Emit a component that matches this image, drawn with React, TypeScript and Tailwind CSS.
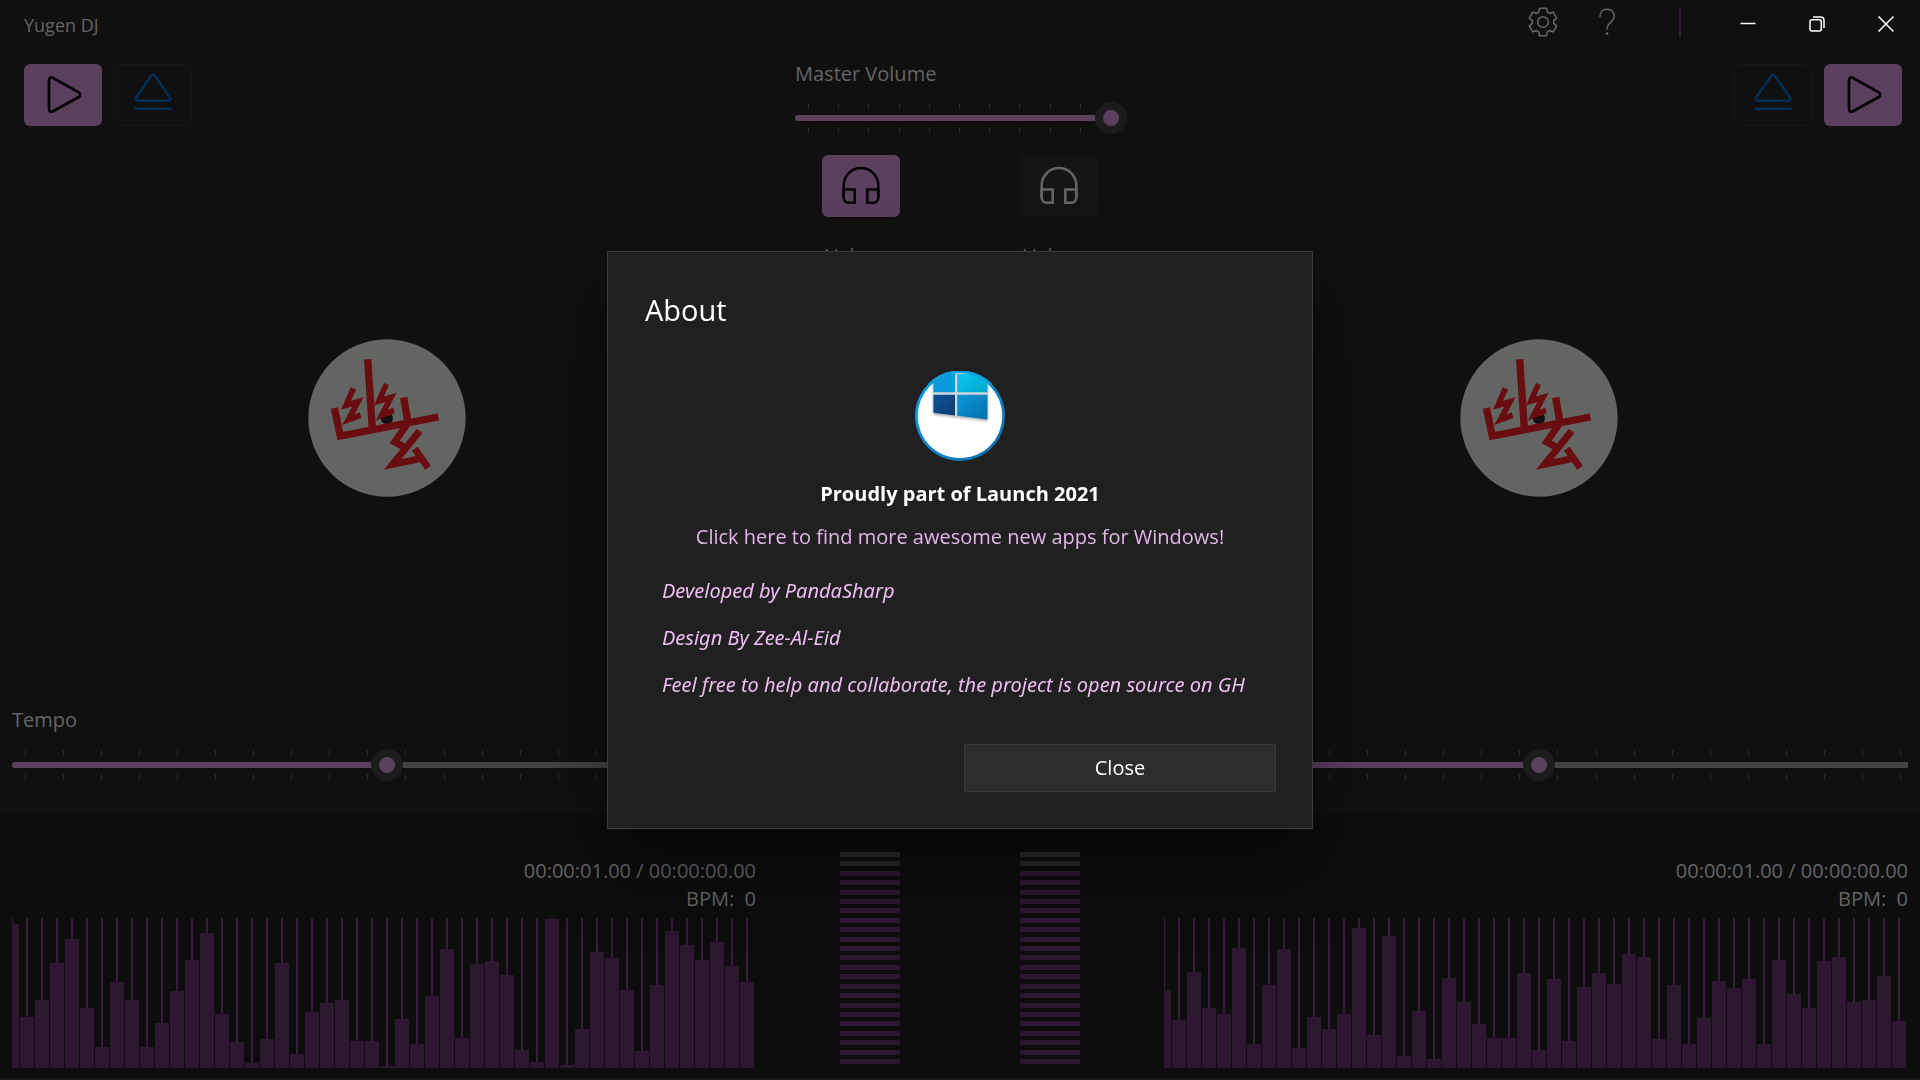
import type { CSSProperties, ReactNode } from "react";

const CHART_HEIGHT = 150;

const LEFT_LEVELS = [
  144, 51, 68, 105, 129, 60, 21, 86, 68, 21, 45, 77, 108, 135, 54, 26, 5, 29, 105, 14, 56, 65, 68, 27, 27, 2,
  49, 24, 72, 119, 30, 104, 107, 93, 18, 6, 149, 3, 39, 116, 110, 78, 17, 83, 137, 123, 108, 126, 102, 86,
];

const RIGHT_LEVELS = [
  78, 48, 96, 60, 54, 120, 24, 83, 119, 20, 51, 39, 54, 140, 33, 132, 12, 57, 9, 90, 66, 44, 30, 30, 95, 18,
  89, 27, 81, 95, 84, 114, 111, 29, 83, 24, 50, 87, 80, 89, 24, 108, 74, 60, 107, 111, 66, 68, 92, 47,
];

function PlayIcon() {
  return (
    <svg width="40" height="40" viewBox="0 0 40 40" fill="none" stroke="#000" strokeWidth="2.7" strokeLinejoin="round" aria-hidden="true">
      <path d="M6 5.2C6 2.8 8 1.8 10 3L35.8 17.4C37.6 18.5 37.6 20.9 35.8 22L10 36.3C8 37.4 6 36.4 6 34.2Z" />
    </svg>
  );
}

function EjectIcon() {
  return (
    <svg width="40" height="44" viewBox="0 0 40 44" fill="none" stroke="#02305a" strokeWidth="2.5" strokeLinecap="round" strokeLinejoin="round" aria-hidden="true">
      <path d="M18.2 2.8C19.1 1.5 20.9 1.5 21.8 2.8L36.8 24.4C38 26.1 37 27.8 35 27.8H5C3 27.8 2 26.1 3.2 24.4Z" />
      <path d="M2.5 35.7H37.5" />
    </svg>
  );
}

function HeadphonesIcon({ color }: { color: string }) {
  return (
    <svg width="40" height="40" viewBox="0 0 40 40" fill="none" stroke={color} strokeWidth="2.5" aria-hidden="true">
      <path d="M2.7 32V19.3C2.7 9.6 10.4 2 20 2s17.3 7.6 17.3 17.3V32" />
      <path d="M2.7 23.5H13.7V36.8H8A5.3 5.3 0 0 1 2.7 31.5Z" />
      <path d="M37.3 23.5H26.3V36.8H32A5.3 5.3 0 0 0 37.3 31.5Z" />
    </svg>
  );
}

function GearIcon() {
  const points: string[] = [];
  for (let tooth = 0; tooth < 6; tooth++) {
    for (const [radius, offset] of [[10.8, -23], [14.2, -14], [14.2, 14], [10.8, 23]]) {
      const angle = ((tooth * 60 - 90 + offset) * Math.PI) / 180;
      points.push(`${15 + radius * Math.cos(angle)},${15 + radius * Math.sin(angle)}`);
    }
  }
  return (
    <svg width="30" height="30" viewBox="0 0 30 30" fill="none" stroke="#656565" strokeWidth="1.6" strokeLinejoin="round" aria-hidden="true">
      <polygon points={points.join(" ")} />
      <circle cx="15" cy="15" r="5.3" />
    </svg>
  );
}

function QuestionIcon() {
  return (
    <svg width="20" height="30" viewBox="0 0 20 30" fill="none" stroke="#656565" strokeWidth="1.5" strokeLinecap="round" aria-hidden="true">
      <path d="M3 9.5C3 5 6 2.2 10 2.2s7.2 2.7 7.2 6.8c0 5.6-7.2 6.8-7.2 13" />
      <circle cx="10" cy="26.6" r="1.4" fill="#656565" stroke="none" />
    </svg>
  );
}

function Disc() {
  return (
    <svg width="158" height="158" viewBox="54 58 474 474" fill="none" stroke="#6a0d11" role="img" aria-label="Turntable">
      <circle cx="291" cy="295" r="236" fill="#636562" stroke="none" />
      <circle cx="291" cy="296" r="18" fill="#101010" stroke="none" />
      <path strokeWidth="22" d="M233 119L247 328M133 265L151 349L445 292M341 233L355 315" />
      <path strokeWidth="17" d="M190 206L168 257L204 246L175 300L212 286" />
      <path strokeWidth="17" d="M289 193L267 244L303 233L275 287L312 272" />
      <path strokeWidth="21" d="M352 312L314 367L346 384M389 334L308 434L394 416M374 387L414 444" />
    </svg>
  );
}

function LaunchLogo() {
  return (
    <svg width="90" height="90" viewBox="0 0 90 90" role="img" aria-label="Launch 2021">
      <defs>
        <linearGradient id="ring" x1="0" y1="0" x2="1" y2="1">
          <stop offset="0" stopColor="#0ea5e9" />
          <stop offset="1" stopColor="#0a6cab" />
        </linearGradient>
        <linearGradient id="cyan" x1="0" y1="0" x2="1" y2="1">
          <stop offset="0" stopColor="#06c8ee" />
          <stop offset="1" stopColor="#06a5cd" />
        </linearGradient>
        <linearGradient id="azure" x1="0" y1="0" x2="1" y2="1">
          <stop offset="0" stopColor="#0a96da" />
          <stop offset="1" stopColor="#0670aa" />
        </linearGradient>
        <linearGradient id="navy" x1="0" y1="0" x2="1" y2="1">
          <stop offset="0" stopColor="#0e529a" />
          <stop offset="1" stopColor="#0a3c72" />
        </linearGradient>
        <filter id="soft" x="-20%" y="-20%" width="140%" height="140%">
          <feGaussianBlur stdDeviation="1.5" />
        </filter>
        <clipPath id="disc">
          <circle cx="45" cy="45" r="45" />
        </clipPath>
      </defs>
      <circle cx="45" cy="45" r="45" fill="url(#ring)" />
      <circle cx="45" cy="45" r="42.3" fill="#fff" />
      <g clipPath="url(#disc)">
        <path d="M18.4 2H72.5V50L18.4 43.5Z" fill="#000" opacity=".35" filter="url(#soft)" />
        <path d="M18.4 0H72.5V48.7L18.4 42Z" fill="#cfd6da" />
        <path d="M18.4 0H40V21.3H18.4Z" fill="#0c98dc" />
        <path d="M42.2 3H72.5V21.3H42.2Z" fill="url(#cyan)" />
        <path d="M18.4 23.7H40V44.5L19.4 42Q18.4 41.8 18.4 40.8Z" fill="url(#navy)" />
        <path d="M42.2 23.7H72.5V47.7Q72.5 48.8 71.4 48.6L42.2 44.8Z" fill="url(#azure)" />
      </g>
      <path d="M14 13.5A44 44 0 0 1 76 13.5" fill="none" stroke="#0d9ee0" strokeWidth="2.5" />
    </svg>
  );
}

function Slider({ label, value, ticks, inset }: { label: string; value: number; ticks: number; inset: string }) {
  return (
    <div className="relative h-8">
      <div className={`absolute inset-0 flex flex-col justify-between py-px ${inset}`} aria-hidden="true">
        {[0, 1].map((row) => (
          <div key={row} className="flex justify-between">
            {Array.from({ length: ticks }, (_, i) => (
              <span key={i} className="h-1.5 w-px bg-[#2b2b2b]" />
            ))}
          </div>
        ))}
      </div>
      <input
        type="range"
        aria-label={label}
        defaultValue={value}
        style={{ "--fill": `${value}%` } as CSSProperties}
        className="relative block h-8 w-full appearance-none bg-transparent [&::-webkit-slider-runnable-track]:h-1.5 [&::-webkit-slider-runnable-track]:rounded-full [&::-webkit-slider-runnable-track]:bg-[linear-gradient(to_right,#5b405e_var(--fill),#434343_var(--fill))] [&::-webkit-slider-thumb]:-mt-[13px] [&::-webkit-slider-thumb]:size-8 [&::-webkit-slider-thumb]:appearance-none [&::-webkit-slider-thumb]:rounded-full [&::-webkit-slider-thumb]:border-8 [&::-webkit-slider-thumb]:border-solid [&::-webkit-slider-thumb]:border-[#1c1c1c] [&::-webkit-slider-thumb]:bg-[#5b405e]"
      />
    </div>
  );
}

function PlayButton() {
  return (
    <button type="button" aria-label="Play" className="flex h-[62px] w-[78px] items-center justify-center rounded-md bg-[#5b405e]">
      <PlayIcon />
    </button>
  );
}

function EjectButton() {
  return (
    <button type="button" aria-label="Load track" className="flex h-[62px] w-[78px] items-center justify-center rounded-md border border-[#171717]">
      <EjectIcon />
    </button>
  );
}

function Deck({ name, showLabel, children }: { name: string; showLabel: boolean; children: ReactNode }) {
  return (
    <section aria-label={name} className="flex flex-col pr-1.5 pb-8 pl-3">
      {children}
      <div className="flex flex-1 items-center justify-center pt-1">
        <Disc />
      </div>
      <div className="mb-[15px] h-7">{showLabel && "Tempo"}</div>
      <div className="mr-1.5 overflow-hidden">
        <div className="-mr-1.5">
          <Slider label={`${name} tempo`} value={50} ticks={20} inset="px-[13px]" />
        </div>
      </div>
    </section>
  );
}

function Waveform({ levels }: { levels: number[] }) {
  return (
    <svg className="mt-[5px] block h-[150px] w-full" viewBox="0 0 744 150" preserveAspectRatio="none" shapeRendering="crispEdges" aria-hidden="true">
      {levels.map((level, i) => (
        <g key={i}>
          <rect x={i * 15 - 1} y="0" width="2" height={CHART_HEIGHT - level} fill="#39193f" />
          <rect x={i * 15 - 7} y={CHART_HEIGHT - level} width="14" height={level} fill="#2e1831" />
        </g>
      ))}
    </svg>
  );
}

function TrackInfo({ levels }: { levels: number[] }) {
  return (
    <div className="px-3 pt-11 pb-[10px]">
      <p className="text-right">00:00:01.00 / 00:00:00.00</p>
      <p className="text-right whitespace-pre">BPM:  0</p>
      <Waveform levels={levels} />
    </div>
  );
}

function Meter() {
  return (
    <div className="flex h-[212px] w-[60px] flex-col justify-between" aria-hidden="true">
      {Array.from({ length: 23 }, (_, i) => (
        <span key={i} className={`h-[5px] ${i < 2 ? "bg-[#282828]" : "bg-[#2e1733]"}`} />
      ))}
    </div>
  );
}

function Channel({ label, active }: { label: string; active: boolean }) {
  return (
    <div className="flex w-[78px] flex-col items-center">
      <button
        type="button"
        aria-label={label}
        aria-pressed={active}
        className={`mb-[25px] flex h-[62px] w-full items-center justify-center rounded-md ${active ? "bg-[#5b405e]" : "bg-[#151515]"}`}
      >
        <HeadphonesIcon color={active ? "#000" : "#656565"} />
      </button>
      <span>Volume</span>
    </div>
  );
}

function AboutDialog() {
  return (
    <div className="fixed inset-0 flex items-center justify-center">
      <div
        role="dialog"
        aria-modal="true"
        aria-labelledby="about-title"
        className="flex w-[706px] flex-col border border-[#3b3b3b] bg-[#202020] p-9 text-white shadow-[0_36px_72px_rgba(0,0,0,0.4)]"
      >
        <h2 id="about-title" className="pl-px text-[29px] leading-[44px]">About</h2>
        <div className="mt-[39px] flex flex-col items-center">
          <LaunchLogo />
          <p className="mt-[19px] font-bold">Proudly part of Launch 2021</p>
          <a href="#launch" className="mt-[15px] text-[#e3b5ea]">
            Click here to find more awesome new apps for Windows!
          </a>
        </div>
        <div className="mt-[26px] flex flex-col items-start gap-[19px] pl-[18px] font-['Noto_Sans','Open_Sans',sans-serif] text-[#f0bdf5] italic">
          <a href="#developer">Developed by PandaSharp</a>
          <a href="#designer">Design By Zee-Al-Eid</a>
          <a href="#source" className="whitespace-nowrap">Feel free to help and collaborate, the project is open source on GH</a>
        </div>
        <button type="button" className="mt-[45px] h-12 w-[312px] self-end border border-[#3b3b3b] bg-[#2d2d2d]">
          Close
        </button>
      </div>
    </div>
  );
}

export default function App() {
  return (
    <div className="flex min-h-screen flex-col bg-[#101010] font-['Open_Sans','Noto_Sans',sans-serif] text-[20px] leading-7 text-[#656565]">
      <header className="flex h-12 items-center justify-between pl-6">
        <h1 className="pt-0.5 text-[18px]">Yugen DJ</h1>
        <div className="flex items-center pb-1">
          <button type="button" aria-label="Settings" className="flex w-16 justify-center">
            <GearIcon />
          </button>
          <button type="button" aria-label="Help" className="flex w-16 justify-center">
            <QuestionIcon />
          </button>
          <span className="ml-10 h-[30px] w-0.5 bg-[#3a1b40]" />
          <div className="ml-8 flex pt-1">
            <button type="button" aria-label="Minimize" className="flex w-[69px] justify-center">
              <svg width="16" height="16" viewBox="0 0 16 16" stroke="#fff" strokeWidth="1.5" aria-hidden="true">
                <path d="M.5 7.5H15.5" />
              </svg>
            </button>
            <button type="button" aria-label="Restore" className="flex w-[69px] justify-center">
              <svg width="16" height="16" viewBox="0 0 16 16" fill="none" stroke="#fff" strokeWidth="1.5" aria-hidden="true">
                <rect x="1" y="3.7" width="11.3" height="11.3" rx="2" />
                <path d="M4 1H11.5Q15 1 15 4.500V12" />
              </svg>
            </button>
            <button type="button" aria-label="Close window" className="flex w-[69px] justify-center">
              <svg width="16" height="16" viewBox="0 0 16 16" stroke="#fff" strokeWidth="1.5" aria-hidden="true">
                <path d="M.5 .5L15.500 15.500M15.500 .5L.5 15.500" />
              </svg>
            </button>
          </div>
        </div>
      </header>

      <main className="grid flex-1 grid-cols-[2fr_1fr_2fr] pt-4">
        <Deck name="Left deck" showLabel>
          <div className="flex gap-3 pl-3">
            <PlayButton />
            <EjectButton />
          </div>
        </Deck>
        <section aria-label="Mixer" className="-mt-1">
          <div className="pr-[25px] pl-[27px]">
            <p>Master Volume</p>
            <div className="mt-[14px]">
              <Slider label="Master volume" value={100} ticks={11} inset="pl-[13px] pr-4" />
            </div>
          </div>
          <div className="mt-[21px] flex justify-between px-[54px]">
            <Channel label="Left headphones" active />
            <Channel label="Right headphones" active={false} />
          </div>
        </section>
        <Deck name="Right deck" showLabel={false}>
          <div className="flex justify-end gap-3 pr-3">
            <EjectButton />
            <PlayButton />
          </div>
        </Deck>
      </main>

      <footer className="grid grid-cols-[2fr_1fr_2fr] border-b-2 border-[#1a1618] bg-[#0d0d0d]">
        <TrackInfo levels={LEFT_LEVELS} />
        <div className="flex justify-between px-[72px] pt-[39px]">
          <Meter />
          <Meter />
        </div>
        <TrackInfo levels={RIGHT_LEVELS} />
      </footer>

      <AboutDialog />
    </div>
  );
}
